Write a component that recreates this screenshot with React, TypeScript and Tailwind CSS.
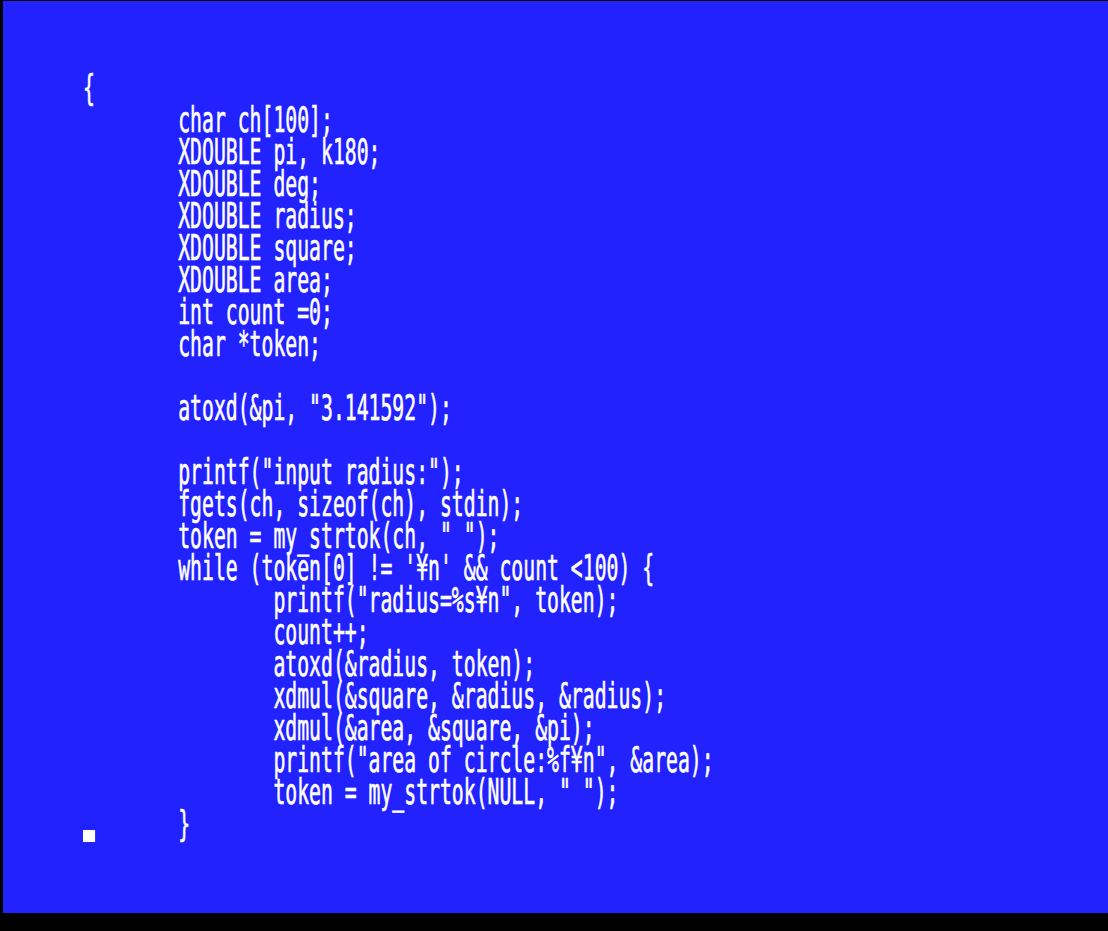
const T = "        ";

const lines: string[] = [
  "{",
  T + "char ch[100];",
  T + "XDOUBLE pi, k180;",
  T + "XDOUBLE deg;",
  T + "XDOUBLE radius;",
  T + "XDOUBLE square;",
  T + "XDOUBLE area;",
  T + "int count =0;",
  T + "char *token;",
  "",
  T + 'atoxd(&pi, "3.141592");',
  "",
  T + 'printf("input radius:");',
  T + "fgets(ch, sizeof(ch), stdin);",
  T + 'token = my_strtok(ch, " ");',
  T + "while (token[0] != '¥n' && count <100) {",
  T + T + 'printf("radius=%s¥n", token);',
  T + T + "count++;",
  T + T + "atoxd(&radius, token);",
  T + T + "xdmul(&square, &radius, &radius);",
  T + T + "xdmul(&area, &square, &pi);",
  T + T + 'printf("area of circle:%f¥n", &area);',
  T + T + 'token = my_strtok(NULL, " ");',
  T + "}",
];

export default function App() {
  return (
    <div className="h-[931px] w-[1108px] bg-black pt-px pl-[3px] overflow-hidden">
      <div className="h-[912px] w-full bg-[#2222ff] pt-[71px] pl-[80px]">
        <div
          className="origin-left scale-x-[0.549] text-white text-[36px] leading-8 whitespace-pre [-webkit-text-stroke:0.7px_white]"
          style={{ fontFamily: '"DejaVu Sans Mono", monospace' }}
        >
          {lines.map((l, i) => (
            <div key={i} className="relative h-8">
              {i === lines.length - 1 && (
                <span className="absolute left-0 top-[22px] w-[22px] h-3 bg-white" />
              )}
              {l}
            </div>
          ))}
        </div>
      </div>
    </div>
  );
}
